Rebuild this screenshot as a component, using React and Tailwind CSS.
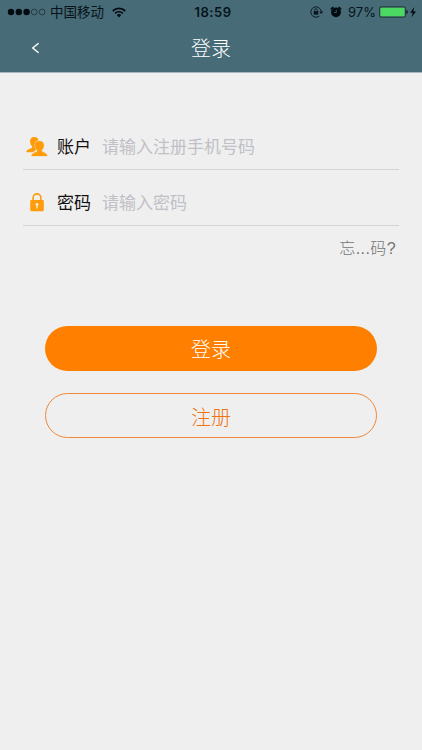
function SignalDots() {
  return (
    <svg width="39" height="8" viewBox="0 0 39 8" className="shrink-0">
      <circle cx="4" cy="4" r="3.2" fill="#020b10" />
      <circle cx="11.8" cy="4" r="3.2" fill="#020b10" />
      <circle cx="19.6" cy="4" r="3.2" fill="#020b10" />
      <circle cx="27.2" cy="4" r="2.9" fill="none" stroke="#14272f" strokeWidth="0.7" />
      <circle cx="35.1" cy="4" r="2.9" fill="none" stroke="#14272f" strokeWidth="0.7" />
    </svg>
  );
}

function WifiIcon() {
  return (
    <svg width="14" height="11" viewBox="0 0 14 11" fill="none" stroke="#020b10" className="shrink-0">
      <path d="M0.8 4A8.8 8.8 0 0 1 13.2 4" strokeWidth="1.8" />
      <path d="M3.1 6.4A5.5 5.5 0 0 1 10.9 6.4" strokeWidth="1.6" />
      <path d="M7 10.4L4.8 8.1A3.1 3.1 0 0 1 9.2 8.1Z" fill="#020b10" stroke="none" />
    </svg>
  );
}

function RotationLockIcon() {
  return (
    <svg width="14" height="12" viewBox="0 0 14 12" fill="none" stroke="#06141a" className="shrink-0">
      <path d="M9.3 10.1A5.2 5.2 0 1 1 11.2 5.4" strokeWidth="0.9" />
      <path d="M9.2 5.4H13.2L11.2 8Z" fill="#06141a" stroke="none" />
      <rect x="3.7" y="5.2" width="4.6" height="3.4" fill="#06141a" stroke="none" />
      <path d="M4.6 5.3V4.2a1.4 1.4 0 0 1 2.8 0v1.1" strokeWidth="0.8" />
    </svg>
  );
}

function AlarmIcon() {
  return (
    <svg width="12" height="12" viewBox="0 0 12 12" fill="none" stroke="#020b10" className="shrink-0">
      <path d="M1.3 2.9L2.9 1.4M10.7 2.9L9.1 1.4" strokeWidth="1.5" strokeLinecap="round" />
      <circle cx="6" cy="6.3" r="4.9" fill="#020b10" stroke="none" />
      <path d="M6.3 3.7V6.5H4.2" stroke="#4a6a76" strokeWidth="0.8" />
    </svg>
  );
}

function BatteryIcon() {
  return (
    <svg width="38" height="12" viewBox="0 0 38 12" className="shrink-0">
      <rect x="0.5" y="0.8" width="26" height="10.4" rx="1.8" fill="#45655f" stroke="#12292d" strokeWidth="0.7" />
      <rect x="1.4" y="1.7" width="24.2" height="8.6" rx="1" fill="#4bd964" />
      <path d="M27.4 4a2.1 2.1 0 0 1 0 4Z" fill="#06141a" />
      <path d="M35.2 1.1L31.2 6.8H33.8L32.4 11.2L37.1 5.5H34.3Z" fill="#020b10" />
    </svg>
  );
}

function UsersIcon() {
  return (
    <svg width="22" height="20" viewBox="0 0 22 20" fill="#ff9c0b" className="shrink-0">
      <path d="M8.6 0.1C5.3 0.1 3.9 2.2 4.1 5C4.2 7 5 8.3 6.1 9.3V10.3C5.8 11.9 0.6 11.7 0.2 15.3H7L11 12V4L12.6 3.4C12.2 1.4 10.7 0.1 8.6 0.1Z" />
      <path
        d="M13.5 3.9C10.3 3.9 8.9 5.9 9.1 8.6C9.2 10.7 10 12.1 11.2 13.1V13.9C10.9 15.4 5.9 15.3 5.4 19H21.4C21 15.3 16.1 15.4 15.8 13.9V13.1C17 12.1 17.8 10.7 17.9 8.6C18.1 5.9 16.5 3.9 13.5 3.9Z"
        stroke="#f3dfbd"
        strokeWidth="1"
        paintOrder="stroke"
      />
    </svg>
  );
}

function LockIcon() {
  return (
    <svg width="14" height="19" viewBox="0 0 14 19" className="shrink-0">
      <path d="M3.1 9V4.8a3.9 3.9 0 0 1 7.8 0V9" fill="none" stroke="#ff9c0b" strokeWidth="1.6" />
      <rect x="0.2" y="7" width="13.6" height="11.2" rx="1.1" fill="#ff9c0b" />
      <circle cx="7" cy="11.3" r="1.4" fill="#f7f0e3" />
      <path d="M6.4 11.8h1.2v3.7h-1.2Z" fill="#f7f0e3" />
    </svg>
  );
}

function Field({ icon, label, placeholder, type }) {
  return (
    <label className="flex h-14 items-center border-b border-[#d4d4d6] pt-2.5">
      <span className="flex w-[34px] shrink-0 items-center">{icon}</span>
      <span className="w-[45px] shrink-0 pt-[3px] text-[17px] font-normal leading-6 text-[#111111]">{label}</span>
      <input
        type={type}
        placeholder={placeholder}
        className="h-[27px] min-w-0 flex-1 bg-transparent pt-[3px] text-[17px] font-normal leading-6 outline-none placeholder:text-[#c0c0c6]"
      />
    </label>
  );
}

export default function App() {
  return (
    <div className="flex h-[750px] w-[422px] flex-col overflow-hidden bg-[#efefef] font-['Liberation_Sans','Noto_Sans_CJK_SC',sans-serif] font-light">
      <header className="h-[73px] shrink-0 border-b border-[#a9b7bd] bg-[#486b78]">
        <div className="grid h-6 grid-cols-[1fr_auto_1fr] items-center pl-[7px] pr-[5px] text-[#06141a]">
          <div className="flex items-center">
            <SignalDots />
            <span className="ml-1 mr-2 pt-0.5 text-[13.5px] font-normal leading-5">中国移动</span>
            <WifiIcon />
          </div>
          <span className="pl-0.5 font-['Inter',sans-serif] text-[13px] font-semibold leading-5 tracking-[0.5px]">18:59</span>
          <div className="flex items-center justify-end">
            <RotationLockIcon />
            <span className="ml-[6px] mr-[6px] flex">
              <AlarmIcon />
            </span>
            <span className="mr-[3px] font-['Inter',sans-serif] text-[13px] font-normal leading-5">97%</span>
            <BatteryIcon />
          </div>
        </div>
        <div className="grid h-12 grid-cols-[1fr_auto_1fr] items-center">
          <button aria-label="返回" className="ml-[31px] w-[9px]">
            <svg width="9" height="12" viewBox="0 0 9 12" fill="none" stroke="#fff" strokeWidth="1.4">
              <path d="M7.6 1.2L1.7 6L7.6 10.8" />
            </svg>
          </button>
          <h1 className="pt-0.5 text-xl leading-7 text-white">登录</h1>
        </div>
      </header>

      <main>
        <form className="px-[23px] pt-[41px]">
          <Field icon={<span className="ml-[3px] flex"><UsersIcon /></span>} label="账户" placeholder="请输入注册手机号码" type="tel" />
          <Field icon={<span className="ml-[7px] flex"><LockIcon /></span>} label="密码" placeholder="请输入密码" type="password" />
        </form>
        <div className="flex justify-end pr-[26px] pt-[11px]">
          <a className="text-base leading-6 tracking-[0.4px] text-[#747474]">忘...码?</a>
        </div>
        <div className="flex flex-col gap-[22px] px-[45px] pt-[65px]">
          <button className="h-[45px] rounded-full bg-[#ff8000] pt-0.5 text-xl text-white">登录</button>
          <button className="h-[45px] rounded-full border border-[#ef883b] pt-1 text-xl text-[#ef7410]">注册</button>
        </div>
      </main>
    </div>
  );
}
